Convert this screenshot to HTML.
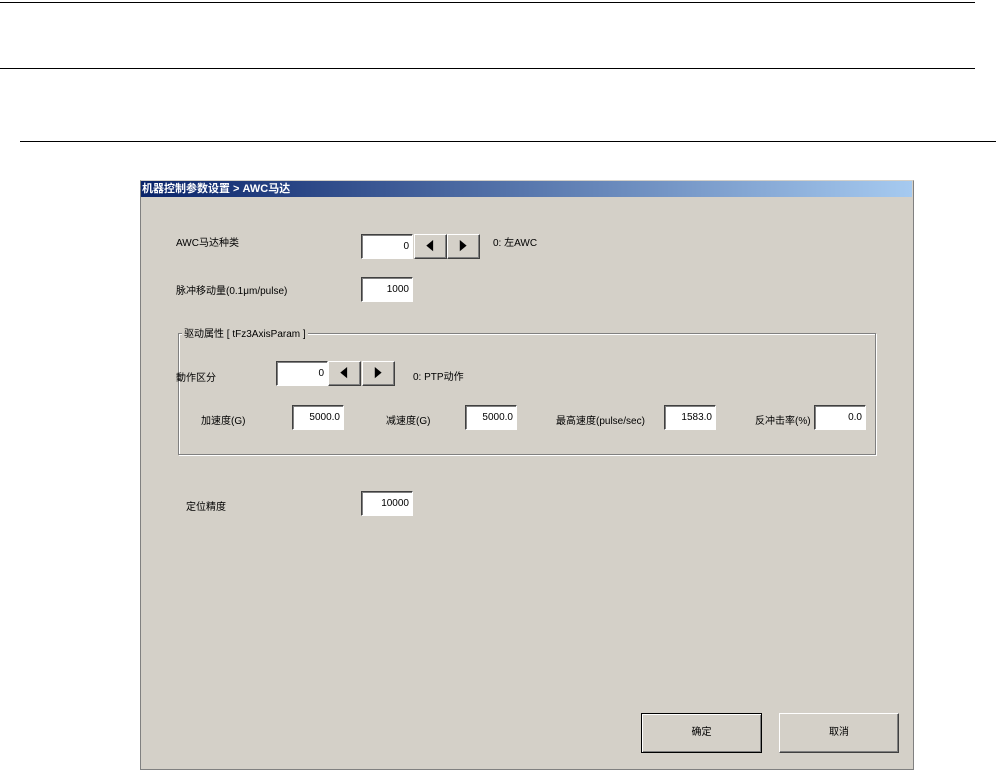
<!DOCTYPE html>
<html><head><meta charset="utf-8"><style>
body{margin:0;width:996px;height:769px;background:#fff;position:relative;overflow:hidden;font-family:"Liberation Sans","Noto Sans CJK SC",sans-serif;font-size:10px;color:#000}
.a{position:absolute}
.hl{position:absolute;height:1px;background:#000}
.win{left:140px;top:180px;width:772px;height:588px;background:#d4d0c8;border:1px solid #808080;border-top:1px solid #d4d0c8}
.title{left:141px;top:181px;width:771px;height:16px;background:linear-gradient(to right,#0a246a,#a6caf0);color:#fff;font-weight:bold;font-size:11px;line-height:16px;padding-left:1px;box-sizing:border-box}
.in{position:absolute;background:#fff;border-top:1px solid #404040;border-left:1px solid #404040;border-bottom:1px solid #fff;border-right:1px solid #fff;box-shadow:inset 1px 1px 0 #808080;box-sizing:border-box;text-align:right;padding-right:3px;font-family:"Liberation Sans",sans-serif;font-size:10px}
.btn{position:absolute;background:#d4d0c8;border-top:1px solid #fff;border-left:1px solid #fff;border-right:1px solid #404040;border-bottom:1px solid #404040;box-shadow:inset -1px -1px 0 #808080;box-sizing:border-box;text-align:center}
.ar{font-size:12px;transform:scaleX(0.7)}
.t{position:absolute;white-space:nowrap}
</style></head><body>
<div class="hl" style="left:0;top:2px;width:975px"></div>
<div class="hl" style="left:0;top:68px;width:975px"></div>
<div class="hl" style="left:20px;top:141px;width:976px"></div>
<div class="a win"></div>
<div class="a title">机器控制参数设置 &gt; AWC马达</div>

<div class="t" style="left:176px;top:234px">AWC马达种类</div>
<div class="in" style="left:361px;top:234px;width:52px;height:25px;line-height:23px">0</div>
<div class="btn" style="left:414px;top:234px;width:33px;height:25px;line-height:22px"><span class="ar" style="display:inline-block">◀</span></div>
<div class="btn" style="left:447px;top:234px;width:33px;height:25px;line-height:22px"><span class="ar" style="display:inline-block">▶</span></div>
<div class="t" style="left:493px;top:234px">0: 左AWC</div>

<div class="t" style="left:176px;top:282px">脉冲移动量(0.1μm/pulse)</div>
<div class="in" style="left:361px;top:277px;width:52px;height:25px;line-height:23px">1000</div>

<div class="a" style="left:178px;top:333px;width:696px;height:120px;border:1px solid #808080;box-shadow:1px 1px 0 #fff,inset 1px 1px 0 #fff"></div>
<div class="t" style="left:182px;top:325px;background:#d4d0c8;padding:0 2px">驱动属性 [ tFz3AxisParam ]</div>

<div class="t" style="left:176px;top:369px">動作区分</div>
<div class="in" style="left:276px;top:361px;width:52px;height:25px;line-height:23px">0</div>
<div class="btn" style="left:328px;top:361px;width:33px;height:25px;line-height:22px"><span class="ar" style="display:inline-block">◀</span></div>
<div class="btn" style="left:362px;top:361px;width:33px;height:25px;line-height:22px"><span class="ar" style="display:inline-block">▶</span></div>
<div class="t" style="left:413px;top:368px">0: PTP动作</div>

<div class="t" style="left:201px;top:412px">加速度(G)</div>
<div class="in" style="left:292px;top:405px;width:52px;height:25px;line-height:23px">5000.0</div>
<div class="t" style="left:386px;top:412px">减速度(G)</div>
<div class="in" style="left:465px;top:405px;width:52px;height:25px;line-height:23px">5000.0</div>
<div class="t" style="left:556px;top:412px">最高速度(pulse/sec)</div>
<div class="in" style="left:664px;top:405px;width:52px;height:25px;line-height:23px">1583.0</div>
<div class="t" style="left:755px;top:412px">反冲击率(%)</div>
<div class="in" style="left:814px;top:405px;width:52px;height:25px;line-height:23px">0.0</div>

<div class="t" style="left:186px;top:498px">定位精度</div>
<div class="in" style="left:361px;top:491px;width:52px;height:25px;line-height:23px">10000</div>

<div class="btn" style="left:641px;top:713px;width:121px;height:40px;line-height:38px;border:1px solid #000;box-shadow:inset 1px 1px 0 #fff,inset -1px -1px 0 #808080">确定</div>
<div class="btn" style="left:779px;top:713px;width:120px;height:40px;line-height:38px">取消</div>
</body></html>
